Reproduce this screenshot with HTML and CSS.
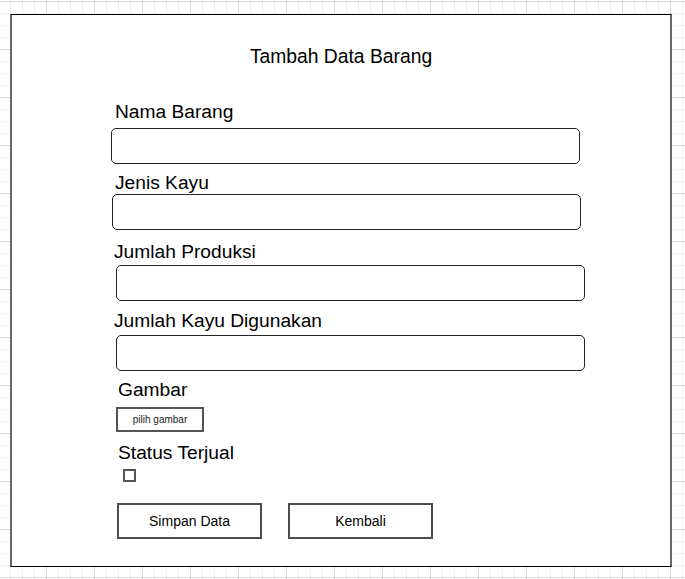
FILE: index.html
```html
<!DOCTYPE html>
<html lang="id">
<head>
<meta charset="utf-8">
<title>Tambah Data Barang</title>
<link rel="stylesheet" href="styles.css">
</head>
<body>
<div class="frame">
  <div class="title">Tambah Data Barang</div>

  <div class="label label-nama">Nama Barang</div>
  <div class="input input-nama"></div>

  <div class="label label-jenis">Jenis Kayu</div>
  <div class="input input-jenis"></div>

  <div class="label label-produksi">Jumlah Produksi</div>
  <div class="input input-produksi"></div>

  <div class="label label-kayu">Jumlah Kayu Digunakan</div>
  <div class="input input-kayu"></div>

  <div class="label label-gambar">Gambar</div>
  <div class="file-btn">pilih gambar</div>

  <div class="label label-status">Status Terjual</div>
  <div class="checkbox"></div>

  <div class="actions">
    <div class="btn">Simpan Data</div>
    <div class="btn">Kembali</div>
  </div>
</div>
</body>
</html>
```

FILE: styles.css
```css
html, body {
  margin: 0;
  padding: 0;
}

body {
  width: 685px;
  height: 579px;
  overflow: hidden;
  font-family: "Liberation Sans", Arial, sans-serif;
  color: #000;
  background-color: #fff;
  background-image:
    linear-gradient(to right, #d9d9d9 1px, transparent 1px),
    linear-gradient(to bottom, #d9d9d9 1px, transparent 1px),
    linear-gradient(to right, #efefef 1px, transparent 1px),
    linear-gradient(to bottom, #efefef 1px, transparent 1px);
  background-size: 48px 48px, 48px 48px, 12px 12px, 12px 12px;
  background-position: 46px 1px, 46px 1px, 10px 1px, 10px 1px;
}

.frame {
  box-sizing: border-box;
  margin: 14px 0 0 10px;
  width: 662px;
  height: 553px;
  background: #fff;
  border-top: 1px solid #000;
  border-bottom: 1px solid #000;
  border-left: 2px solid #666;
  border-right: 2px solid #666;
  padding-top: 31px;
}

.title {
  font-size: 19.3px;
  line-height: 22px;
  height: 22px;
  text-align: center;
}

.label {
  font-size: 19.2px;
  line-height: 22px;
  height: 22px;
  margin-left: 103px;
  white-space: nowrap;
}

.label-nama { margin-top: 33px; }
.label-jenis { margin-top: 8px; }
.label-produksi { margin-top: 11px; margin-left: 102px; }
.label-kayu { margin-top: 9px; margin-left: 102px; }
.label-gambar { margin-top: 8px; margin-left: 106px; }
.label-status { margin-top: 10px; margin-left: 106px; }

.input {
  box-sizing: border-box;
  width: 469px;
  height: 36px;
  border: 1px solid #222;
  border-radius: 5px;
  background: #fff;
}

.input-nama { margin-top: 5px; margin-left: 99px; }
.input-jenis { margin-top: 0; margin-left: 100px; }
.input-produksi { margin-top: 2px; margin-left: 104px; }
.input-kayu { margin-top: 3px; margin-left: 104px; }

.file-btn {
  box-sizing: border-box;
  margin-top: 6px;
  margin-left: 104px;
  width: 88px;
  height: 25px;
  border: 2px solid #555;
  font-size: 10px;
  display: flex;
  align-items: center;
  justify-content: center;
  color: #222;
}

.checkbox {
  box-sizing: border-box;
  margin-top: 5px;
  margin-left: 111px;
  width: 13px;
  height: 13px;
  border: 2px solid #555;
}

.actions {
  display: flex;
  gap: 26px;
  margin-top: 21px;
  margin-left: 105px;
}

.btn {
  box-sizing: border-box;
  width: 145px;
  height: 36px;
  border: 2px solid #4d4d4d;
  font-size: 14px;
  display: flex;
  align-items: center;
  justify-content: center;
  padding-bottom: 1px;
}
```
